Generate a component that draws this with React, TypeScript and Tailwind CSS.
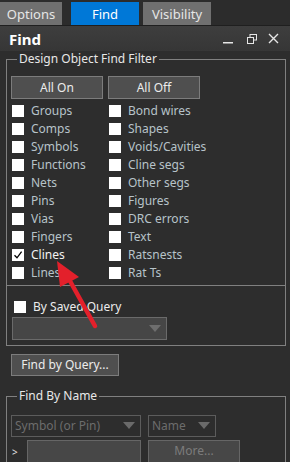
import React from "react";

const leftItems = ["Groups", "Comps", "Symbols", "Functions", "Nets", "Pins", "Vias", "Fingers", "Clines", "Lines"];
const rightItems = ["Bond wires", "Shapes", "Voids/Cavities", "Cline segs", "Other segs", "Figures", "DRC errors", "Text", "Ratsnests", "Rat Ts"];

function Box({ checked }: { checked?: boolean }) {
  return (
    <span className="flex h-[12px] w-[12px] shrink-0 items-center justify-center bg-white">
      {checked && (
        <svg width="10" height="10" viewBox="0 0 10 10">
          <path d="M1.5 5.2 L4 7.8 L8.6 1.6" fill="none" stroke="#000" strokeWidth="1.3" />
        </svg>
      )}
    </span>
  );
}

function Row({ label, checked }: { label: string; checked?: boolean }) {
  return (
    <div className="flex h-[18px] items-center gap-[7px] pl-[1px]">
      <Box checked={checked} />
      <span className={checked ? "text-[#f2f2f2]" : "text-[#b7c3c9]"}>{label}</span>
    </div>
  );
}

function Caret({ color }: { color: string }) {
  return (
    <svg width="12" height="8" viewBox="0 0 12 8">
      <path d="M0 0 H12 L6 7 Z" fill={color} />
    </svg>
  );
}

export default function App() {
  return (
    <div
      className="relative h-[462px] w-[290px] overflow-hidden bg-[#2d2d2d] text-[12px] leading-[16px]"
      style={{ fontFamily: '"Noto Sans", "Open Sans", sans-serif' }}
    >
      {/* Tabs */}
      <div className="flex h-[26px] items-end border-b border-[#1f1f1f] bg-[#2c2c2c] text-[13px]">
        <div className="flex h-[23px] w-[62px] items-center justify-center bg-[#707070] text-[#e6e6e6]">Options</div>
        <div className="ml-[9px] flex h-[23px] w-[68px] items-center justify-center bg-[#0078d7] text-white">Find</div>
        <div className="ml-[4px] flex h-[23px] w-[68px] items-center justify-center bg-[#707070] text-[#e6e6e6]">Visibility</div>
      </div>

      {/* Title bar */}
      <div className="flex h-[25px] items-center bg-gradient-to-b from-[#3e3e3e] to-[#363636] pl-[9px] pr-[11px]">
        <span className="text-[15px] font-bold text-white">Find</span>
        <div className="ml-auto flex items-center">
          <svg width="10" height="12" viewBox="0 0 10 12">
            <rect x="0" y="9" width="10" height="1.5" fill="#e6e6e6" />
          </svg>
          <svg className="ml-[14px]" width="10" height="10" viewBox="0 0 10 10">
            <rect x="3" y="0.5" width="6.5" height="5.5" fill="none" stroke="#e6e6e6" />
            <rect x="0.5" y="3.5" width="6" height="6" fill="#363636" stroke="#e6e6e6" />
          </svg>
          <svg className="ml-[11px]" width="11" height="11" viewBox="0 0 11 11">
            <path d="M1 1 L10 10 M10 1 L1 10" stroke="#e6e6e6" strokeWidth="1.4" />
          </svg>
        </div>
      </div>

      {/* Design Object Find Filter */}
      <fieldset className="ml-[6px] mr-[4px] border border-[#808080] pb-[3px] pl-[4px]">
        <legend className="ml-[6px] px-[2px] text-[#e8e8e8]">Design Object Find Filter</legend>
        <div className="mt-[9px] grid grid-cols-[97px_97px]">
          <button className="h-[23px] w-[92px] border border-[#7c7c7c] bg-[#4f4f4f] text-[#ececec]">All On</button>
          <button className="h-[23px] w-[92px] border border-[#7c7c7c] bg-[#4f4f4f] text-[#ececec]">All Off</button>
        </div>
        <div className="mt-[3px] grid grid-cols-[97px_97px]">
          <div>
            {leftItems.map((l) => (
              <Row key={l} label={l} checked={l === "Clines"} />
            ))}
          </div>
          <div>
            {rightItems.map((l) => (
              <Row key={l} label={l} />
            ))}
          </div>
        </div>
      </fieldset>

      {/* Saved query */}
      <div className="ml-[6px] mr-[4px] h-[60px] border-x border-b border-[#808080] pl-[5px] pt-[15px]">
        <div className="flex h-[12px] items-center gap-[7px] pl-[2px]">
          <Box />
          <span className="text-[#ececec]">By Saved Query</span>
        </div>
        <div className="mt-[4px] flex h-[23px] w-[155px] items-center justify-end border border-[#6a6a6a] bg-[#464646] pr-[5px]">
          <Caret color="#6e6e6e" />
        </div>
      </div>

      <button className="ml-[11px] mt-[8px] h-[22px] w-[108px] border border-[#7c7c7c] bg-[#4f4f4f] text-[#ececec]">
        Find by Query...
      </button>

      {/* Find By Name */}
      <fieldset className="ml-[6px] mr-[4px] mt-[12px] border border-[#808080] pl-[4px]">
        <legend className="ml-[6px] px-[2px] text-[#e8e8e8]">Find By Name</legend>
        <div className="mt-[11px] flex gap-[7px]">
          <div className="flex h-[22px] w-[130px] items-center justify-between border border-[#5c5c5c] px-[3px] pr-[5px] text-[#6c6c6c]">
            <span>Symbol (or Pin)</span>
            <Caret color="#6a6a6a" />
          </div>
          <div className="flex h-[22px] w-[68px] items-center justify-between border border-[#5c5c5c] px-[3px] pr-[5px] text-[#6c6c6c]">
            <span>Name</span>
            <Caret color="#6a6a6a" />
          </div>
        </div>
        <div className="mt-[3px] flex h-[30px] items-start">
          <span className="mt-[4px] w-[16px] pl-[1px] text-[10px] text-[#e0e0e0]">&gt;</span>
          <div className="h-[30px] w-[114px] border border-[#666] bg-[#474747]" />
          <div className="ml-[7px] flex h-[30px] w-[92px] justify-center border border-[#666] bg-[#474747] pt-[2px] text-[#7c7c7c]">
            More...
          </div>
        </div>
      </fieldset>

      {/* Red arrow annotation */}
      <svg className="pointer-events-none absolute left-0 top-0" width="290" height="462" viewBox="0 0 290 462">
        <line x1="70" y1="281" x2="95" y2="326" stroke="#e3202b" strokeWidth="4.5" strokeLinecap="round" />
        <polygon points="57,261 60,287 79,277" fill="#e3202b" />
      </svg>
    </div>
  );
}
